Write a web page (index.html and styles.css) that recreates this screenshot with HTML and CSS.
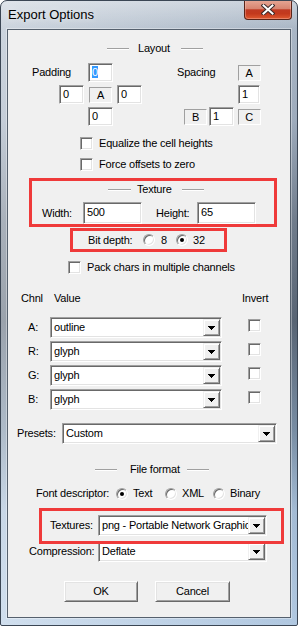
FILE: index.html
```html
<!DOCTYPE html>
<html>
<head>
<meta charset="utf-8">
<title>Export Options</title>
<link rel="stylesheet" href="styles.css">
</head>
<body>
<div class="window">
  <div class="titlebar">
    <span class="title">Export Options</span>
    <div class="close">
      <svg width="14" height="11" viewBox="0 0 14 11">
        <path d="M2.5 1.5 L11.5 9.5 M11.5 1.5 L2.5 9.5" stroke="#3d2a2a" stroke-width="4" stroke-linecap="square" fill="none"/>
        <path d="M2.5 1.5 L11.5 9.5 M11.5 1.5 L2.5 9.5" stroke="#ffffff" stroke-width="2" stroke-linecap="square" fill="none"/>
      </svg>
    </div>
  </div>
  <div class="client">
    <div class="sep sep-layout"><span class="line"></span><span class="sep-text">Layout</span><span class="line"></span></div>

    <div class="spacing-row">
      <div class="pgrid pgrid-left">
        <span class="glabel gl-pad">Padding</span>
        <span class="field g-r1c3"><span class="sel">0</span></span>
        <span class="field g-r2c2">0</span>
        <span class="lbox g-r2c3">A</span>
        <span class="field g-r2c4">0</span>
        <span class="field g-r3c3">0</span>
      </div>
      <div class="pgrid pgrid-right">
        <span class="glabel gl-spc">Spacing</span>
        <span class="lbox g-r1c4">A</span>
        <span class="field g-r2c4">1</span>
        <span class="lbox g-r3c2">B</span>
        <span class="field g-r3c3">1</span>
        <span class="lbox g-r3c4">C</span>
      </div>
    </div>

    <div class="check-row row-eq"><span class="cb"></span><span class="cb-text">Equalize the cell heights</span></div>
    <div class="check-row row-force"><span class="cb"></span><span class="cb-text">Force offsets to zero</span></div>

    <div class="mark mark-texture">
      <div class="sep sep-texture"><span class="line"></span><span class="sep-text">Texture</span><span class="line"></span></div>
      <div class="dims">
        <span class="dim-label">Width:</span>
        <span class="field dim-field">500</span>
        <span class="dim-label dim-label2">Height:</span>
        <span class="field dim-field">65</span>
      </div>
    </div>

    <div class="mark mark-bits">
      <span class="bits-label">Bit depth:</span>
      <span class="opt opt-8"><span class="rb"></span><span class="opt-text">8</span></span>
      <span class="opt"><span class="rb on"></span><span class="opt-text opt-text32">32</span></span>
    </div>

    <div class="check-row row-pack"><span class="cb"></span><span class="cb-text">Pack chars in multiple channels</span></div>

    <div class="chan-head">
      <span class="h-chnl">Chnl</span>
      <span class="h-value">Value</span>
      <span class="h-invert">Invert</span>
    </div>

    <div class="chan">
      <span class="chan-label">A:</span>
      <div class="combo"><span class="combo-text">outline</span><span class="combo-btn"><svg width="7" height="4" viewBox="0 0 7 4" shape-rendering="crispEdges"><rect x="0" y="0" width="7" height="1"/><rect x="1" y="1" width="5" height="1"/><rect x="2" y="2" width="3" height="1"/><rect x="3" y="3" width="1" height="1"/></svg></span></div>
      <span class="cb chan-cb"></span>

      <span class="chan-label">R:</span>
      <div class="combo"><span class="combo-text">glyph</span><span class="combo-btn"><svg width="7" height="4" viewBox="0 0 7 4" shape-rendering="crispEdges"><rect x="0" y="0" width="7" height="1"/><rect x="1" y="1" width="5" height="1"/><rect x="2" y="2" width="3" height="1"/><rect x="3" y="3" width="1" height="1"/></svg></span></div>
      <span class="cb chan-cb"></span>

      <span class="chan-label">G:</span>
      <div class="combo"><span class="combo-text">glyph</span><span class="combo-btn"><svg width="7" height="4" viewBox="0 0 7 4" shape-rendering="crispEdges"><rect x="0" y="0" width="7" height="1"/><rect x="1" y="1" width="5" height="1"/><rect x="2" y="2" width="3" height="1"/><rect x="3" y="3" width="1" height="1"/></svg></span></div>
      <span class="cb chan-cb"></span>

      <span class="chan-label">B:</span>
      <div class="combo"><span class="combo-text">glyph</span><span class="combo-btn"><svg width="7" height="4" viewBox="0 0 7 4" shape-rendering="crispEdges"><rect x="0" y="0" width="7" height="1"/><rect x="1" y="1" width="5" height="1"/><rect x="2" y="2" width="3" height="1"/><rect x="3" y="3" width="1" height="1"/></svg></span></div>
      <span class="cb chan-cb"></span>
    </div>

    <div class="form-row row-presets">
      <span class="row-label lab-presets">Presets:</span>
      <div class="combo combo-presets"><span class="combo-text">Custom</span><span class="combo-btn"><svg width="7" height="4" viewBox="0 0 7 4" shape-rendering="crispEdges"><rect x="0" y="0" width="7" height="1"/><rect x="1" y="1" width="5" height="1"/><rect x="2" y="2" width="3" height="1"/><rect x="3" y="3" width="1" height="1"/></svg></span></div>
    </div>

    <div class="sep sep-file"><span class="line"></span><span class="sep-text">File format</span><span class="line"></span></div>

    <div class="form-row row-fontdesc">
      <span class="row-label lab-fontdesc">Font descriptor:</span>
      <span class="opt opt-text-w"><span class="rb on"></span><span class="opt-text">Text</span></span>
      <span class="opt opt-xml-w"><span class="rb"></span><span class="opt-text">XML</span></span>
      <span class="opt"><span class="rb"></span><span class="opt-text">Binary</span></span>
    </div>

    <div class="mark mark-textures">
      <span class="row-label lab-textures">Textures:</span>
      <div class="combo combo-file"><span class="combo-text">png - Portable Network Graphics</span><span class="combo-btn"><svg width="7" height="4" viewBox="0 0 7 4" shape-rendering="crispEdges"><rect x="0" y="0" width="7" height="1"/><rect x="1" y="1" width="5" height="1"/><rect x="2" y="2" width="3" height="1"/><rect x="3" y="3" width="1" height="1"/></svg></span></div>
    </div>

    <div class="form-row row-compress">
      <span class="row-label lab-compress">Compression:</span>
      <div class="combo combo-file"><span class="combo-text">Deflate</span><span class="combo-btn"><svg width="7" height="4" viewBox="0 0 7 4" shape-rendering="crispEdges"><rect x="0" y="0" width="7" height="1"/><rect x="1" y="1" width="5" height="1"/><rect x="2" y="2" width="3" height="1"/><rect x="3" y="3" width="1" height="1"/></svg></span></div>
    </div>

    <div class="buttons">
      <span class="btn btn-ok">OK</span>
      <span class="btn btn-cancel">Cancel</span>
    </div>
  </div>
</div>
</body>
</html>
```

FILE: styles.css
```css
* { box-sizing: border-box; }
html, body { margin: 0; padding: 0; }
body {
  width: 298px;
  height: 626px;
  overflow: hidden;
  background: #ffffff;
  font-family: "Liberation Sans", Arial, sans-serif;
  font-size: 11px;
  line-height: 13px;
  letter-spacing: -0.2px;
  color: #000;
}

/* ---------- window frame ---------- */
.window {
  width: 298px;
  height: 626px;
  border: 1px solid #3b4654;
  border-radius: 7px 7px 2px 2px;
  display: flex;
  flex-direction: column;
  background:
    linear-gradient(to bottom, rgba(255,255,255,0.35), rgba(255,255,255,0) 28px),
    linear-gradient(to right, rgba(225,230,236,0.55), rgba(140,155,175,0.25)),
    linear-gradient(to bottom, #b7c3d0 0, #a3b0c0 120px, #66717f 220px, #46515f 320px, #71889f 430px, #abc5e0 510px, #bdd7f1 626px);
  overflow: hidden;
}
.titlebar {
  height: 28px;
  flex: none;
  display: flex;
  justify-content: space-between;
  align-items: flex-start;
}
.title {
  font-size: 13px;
  line-height: 15px;
  letter-spacing: 0;
  padding: 6px 0 0 7px;
  color: #000;
  text-shadow: 0 0 6px rgba(255,255,255,0.8);
}
.close {
  width: 48px;
  height: 20px;
  margin: -1px 5px 0 0;
  border: 1px solid #5a2418;
  border-top: none;
  border-radius: 0 0 4px 4px;
  background: linear-gradient(to bottom, #e7a896 0, #d88571 45%, #c03a22 52%, #c3391d 72%, #df5a30 100%);
  box-shadow: inset 0 0 0 1px rgba(255,210,200,0.35);
  display: flex;
  align-items: center;
  justify-content: center;
}
.close svg { display: block; }

.client {
  flex: none;
  width: 284px;
  height: 589px;
  margin: 0 6px;
  border: 1px solid #55606d;
  background: #f0f0f0;
  display: flex;
  flex-direction: column;
  box-shadow: 0 0 0 1px rgba(255,255,255,0.35);
}

/* ---------- common controls ---------- */
.sep { display: flex; align-items: flex-start; height: 13px; }
.sep .line {
  width: 22px;
  height: 2px;
  margin-top: 6px;
  border-top: 1px solid #a0a0a0;
  border-bottom: 1px solid #ffffff;
}
.sep-layout { margin-top: 12px; padding-left: 99px; }
.sep-layout .sep-text { margin: 0 11px 0 9px; }
.sep-texture { margin-top: 2px; padding-left: 76px; }
.sep-texture .line:first-child { width: 23px; }
.sep-texture .sep-text { margin: 0 10px 0 6px; }
.sep-file { margin-top: 19px; padding-left: 87px; }
.sep-file .sep-text { margin: 0 7px 0 13px; }

.field {
  display: block;
  height: 19px;
  background: #fff;
  border: 1px solid;
  border-color: #a0a0a0 #fff #fff #a0a0a0;
  box-shadow: inset 1px 1px 0 #696969, inset -1px -1px 0 #e3e3e3;
  padding: 2px 0 0 3px;
  line-height: 13px;
  white-space: nowrap;
}
.sel { background: #3399ff; color: #fff; }

.lbox {
  width: 23px;
  height: 16px;
  border: 1px solid;
  border-color: #a0a0a0 #fff #fff #a0a0a0;
  text-align: center;
  line-height: 14px;
  justify-self: center;
  align-self: center;
}

.cb {
  width: 13px;
  height: 13px;
  flex: none;
  background: #fff;
  border: 1px solid;
  border-color: #a0a0a0 #fff #fff #a0a0a0;
  box-shadow: inset 1px 1px 0 #696969, inset -1px -1px 0 #e3e3e3;
}

.rb {
  width: 12px;
  height: 12px;
  flex: none;
  border-radius: 50%;
  background: #fff;
  border: 1px solid;
  border-color: #a0a0a0 #fff #fff #a0a0a0;
  box-shadow: inset 1px 1px 0 #696969, inset -1px -1px 0 #e3e3e3;
  display: flex;
  align-items: center;
  justify-content: center;
}
.rb.on::after {
  content: "";
  width: 4px;
  height: 4px;
  border-radius: 50%;
  background: #000;
}
.opt { display: flex; align-items: center; }
.opt-text { margin-left: 5px; }

.combo {
  display: flex;
  height: 21px;
  background: #fff;
  border: 1px solid;
  border-color: #a0a0a0 #fff #fff #a0a0a0;
  box-shadow: inset 1px 1px 0 #696969, inset -1px -1px 0 #e3e3e3;
  padding: 1px;
}
.combo-text {
  flex: 1;
  min-width: 0;
  overflow: hidden;
  white-space: nowrap;
  padding: 2px 0 0 2px;
}
.combo-btn {
  width: 17px;
  flex: none;
  background: #f0f0f0;
  border: 1px solid;
  border-color: #f0f0f0 #696969 #696969 #f0f0f0;
  box-shadow: inset 1px 1px 0 #fff, inset -1px -1px 0 #a0a0a0;
  display: flex;
  align-items: center;
  justify-content: center;
}
.combo-btn svg { display: block; fill: #000; }

.btn {
  display: block;
  height: 21px;
  background: #f0f0f0;
  border: 1px solid;
  border-color: #fff #696969 #696969 #fff;
  box-shadow: inset 1px 1px 0 #e3e3e3, inset -1px -1px 0 #a0a0a0;
  text-align: center;
  line-height: 19px;
}

/* ---------- padding / spacing ---------- */
.spacing-row { display: flex; margin-top: 8px; padding-left: 24px; }
.pgrid {
  display: grid;
  grid-template-rows: 19px 19px 19px;
  row-gap: 3px;
}
.pgrid-left { grid-template-columns: 23px 25px 25px 25px; column-gap: 4px; }
.pgrid-right { grid-template-columns: 5px 25px 25px 25px; column-gap: 1px; margin-left: 35px; }
.pgrid-right .g-r1c4, .pgrid-right .g-r2c4, .pgrid-right .g-r3c4 { margin-left: 3px; }
.glabel { align-self: center; white-space: nowrap; }
.gl-pad { grid-row: 1; grid-column: 1 / 3; }
.gl-spc { grid-row: 1; grid-column: 1 / 4; }
.g-r1c3 { grid-row: 1; grid-column: 3; }
.g-r1c4 { grid-row: 1; grid-column: 4; }
.g-r2c2 { grid-row: 2; grid-column: 2; }
.g-r2c3 { grid-row: 2; grid-column: 3; }
.g-r2c4 { grid-row: 2; grid-column: 4; }
.g-r3c2 { grid-row: 3; grid-column: 2; }
.g-r3c3 { grid-row: 3; grid-column: 3; }
.g-r3c4 { grid-row: 3; grid-column: 4; }

/* ---------- check rows ---------- */
.check-row { display: flex; align-items: center; height: 13px; }
.cb-text { margin-left: 6px; white-space: nowrap; }
.row-eq { margin-top: 11px; padding-left: 72px; }
.row-force { margin-top: 8px; padding-left: 72px; }
.row-pack { margin-top: 9px; padding-left: 60px; }

/* ---------- red annotation boxes ---------- */
.mark { border: 3px solid #ef3a3a; }
.mark-texture { margin: 7px 0 0 21px; width: 248px; height: 49px; }
.dims { display: flex; align-items: center; margin-top: 6px; padding-left: 10px; }
.dim-label { width: 41px; flex: none; }
.dim-label2 { margin-left: 14px; }
.dim-field { width: 59px; height: 22px; padding-top: 3px; flex: none; }

.mark-bits {
  margin: 1px 0 0 62px;
  width: 157px;
  height: 24px;
  display: flex;
  align-items: center;
  padding-left: 15px;
}
.bits-label { width: 55px; flex: none; }
.opt-8 { width: 33px; }
.opt-8 .opt-text { margin-left: 6px; }

/* ---------- channels ---------- */
.chan-head { display: flex; margin-top: 18px; padding-left: 13px; height: 13px; }
.h-chnl { width: 33px; }
.h-value { width: 188px; }

.chan {
  display: grid;
  grid-template-columns: 22px 172px 39px;
  grid-auto-rows: 21px;
  row-gap: 3px;
  margin-top: 12px;
  padding-left: 20px;
}
.chan-label { align-self: center; }
.chan-cb { margin: 2px 0 0 26px; }

.form-row { display: flex; align-items: center; }
.row-label { flex: none; white-space: nowrap; }
.row-presets { margin-top: 13px; padding-left: 9px; }
.lab-presets { width: 45px; }
.combo-presets { width: 215px; }

.row-fontdesc { margin-top: 11px; padding-left: 28px; height: 13px; }
.lab-fontdesc { width: 80px; }
.opt-text-w { width: 49px; }
.opt-xml-w { width: 48px; }

.mark-textures {
  position: relative;
  z-index: 1;
  margin: 8px 0 0 31px;
  width: 245px;
  height: 36px;
  display: flex;
  align-items: flex-start;
  padding: 4px 0 0 8px;
}
.lab-textures { width: 48px; margin-top: 4px; }
.combo-file { width: 169px; flex: none; }

.row-compress { margin-top: -3px; padding-left: 21px; }
.lab-compress { width: 69px; }

.buttons { display: flex; margin-top: 19px; padding-left: 56px; }
.btn-ok { width: 74px; }
.btn-cancel { width: 75px; margin-left: 17px; }
```
